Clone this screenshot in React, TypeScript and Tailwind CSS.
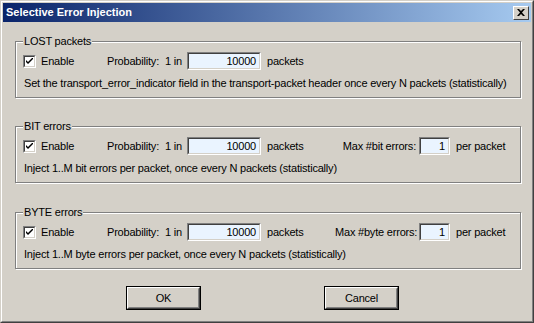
import React from "react";

const font = { fontFamily: '"Liberation Sans", Arial, sans-serif' };

const Sunken = ({ w, value }: { w: string; value: string }) => (
  <div className={`${w} h-[18px] border border-t-[#808080] border-l-[#808080] border-b-white border-r-white`}>
    <div className="w-full h-full border border-t-[#404040] border-l-[#404040] border-b-[#d4d0c8] border-r-[#d4d0c8] bg-[#eaf4ff] flex items-center justify-end pr-[3px] leading-none">
      {value}
    </div>
  </div>
);

const CheckBox = () => (
  <div className="w-[13px] h-[13px] border border-t-[#808080] border-l-[#808080] border-b-white border-r-white">
    <div className="w-full h-full border border-t-[#404040] border-l-[#404040] border-b-[#d4d0c8] border-r-[#d4d0c8] bg-white flex items-center justify-center">
      <svg width="7" height="7" viewBox="0 0 7 7">
        <path d="M0 2 L0 4 L2 6 L7 1 L7 -1 L2 4 Z" fill="#000" />
      </svg>
    </div>
  </div>
);

const GroupBox = ({
  title,
  desc,
  max,
}: {
  title: string;
  desc: string;
  max?: string;
}) => (
  <div className="relative h-[57px] border border-[#808080] shadow-[1px_1px_0_#fff,inset_1px_1px_0_#fff] whitespace-nowrap">
    <span className="absolute left-[7px] top-[-8px] bg-[#d4d0c8] px-[1px] leading-[14px]">{title}</span>
    <div className="flex items-center mt-[10px] pl-[7px] h-[18px]">
      <div className="w-[84px] flex items-center">
        <CheckBox />
        <span className="ml-[5px]">Enable</span>
      </div>
      <span className="w-[58px]">Probability:</span>
      <span className="w-[22px]">1 in</span>
      <Sunken w="w-[74px]" value="10000" />
      <span className="ml-[6px] w-[68px]">packets</span>
      {max && (
        <>
          <span className="w-[81px] text-right">{max}</span>
          <div className="ml-[3px]">
            <Sunken w="w-[31px]" value="1" />
          </div>
          <span className="ml-[6px]">per packet</span>
        </>
      )}
    </div>
    <div className="pl-[8px] mt-[6px] leading-[14px]">{desc}</div>
  </div>
);

const Button = ({ label }: { label: string }) => (
  <div className="w-[75px] h-[24px] border border-[#000]">
    <div className="w-full h-full border border-t-white border-l-white border-b-[#404040] border-r-[#404040]">
      <div className="w-full h-full border border-t-[#d4d0c8] border-l-[#d4d0c8] border-b-[#808080] border-r-[#808080] flex items-center justify-center">
        {label}
      </div>
    </div>
  </div>
);

export default function App() {
  return (
    <div className="w-[534px] h-[323px] text-[11px] tracking-[-0.2px] text-black" style={font}>
      <div className="w-full h-full border border-t-[#d4d0c8] border-l-[#d4d0c8] border-b-[#404040] border-r-[#404040]">
        <div className="w-full h-full border border-t-white border-l-white border-b-[#808080] border-r-[#808080] bg-[#d4d0c8] p-[1px] flex flex-col">
          <div className="h-[19px] flex items-center justify-between bg-[linear-gradient(to_right,#0a246a,#a6caf0)] pl-[3px] pr-[2px]">
            <span className="text-white font-bold text-[11px] tracking-normal">Selective Error Injection</span>
            <div className="w-[16px] h-[14px] bg-[#d4d0c8] border border-t-white border-l-white border-b-[#404040] border-r-[#404040] flex items-center justify-center">
              <svg width="8" height="7" viewBox="0 0 8 7">
                <path d="M0 0h2l2 2l2-2h2l-3 3.5l3 3.5h-2l-2-2l-2 2h-2l3-3.5z" fill="#000" />
              </svg>
            </div>
          </div>
          <div className="pl-[12px] pr-[10px] pt-[19px]">
            <GroupBox
              title="LOST packets"
              desc="Set the transport_error_indicator field in the transport-packet header once every N packets (statistically)"
            />
            <div className="mt-[28px]">
              <GroupBox
                title="BIT errors"
                desc="Inject 1..M bit errors per packet, once every N packets (statistically)"
                max="Max #bit errors:"
              />
            </div>
            <div className="mt-[29px]">
              <GroupBox
                title="BYTE errors"
                desc="Inject 1..M byte errors per packet, once every N packets (statistically)"
                max="Max #byte errors:"
              />
            </div>
            <div className="flex mt-[17px] pl-[111px] gap-[123px]">
              <Button label="OK" />
              <Button label="Cancel" />
            </div>
          </div>
        </div>
      </div>
    </div>
  );
}
